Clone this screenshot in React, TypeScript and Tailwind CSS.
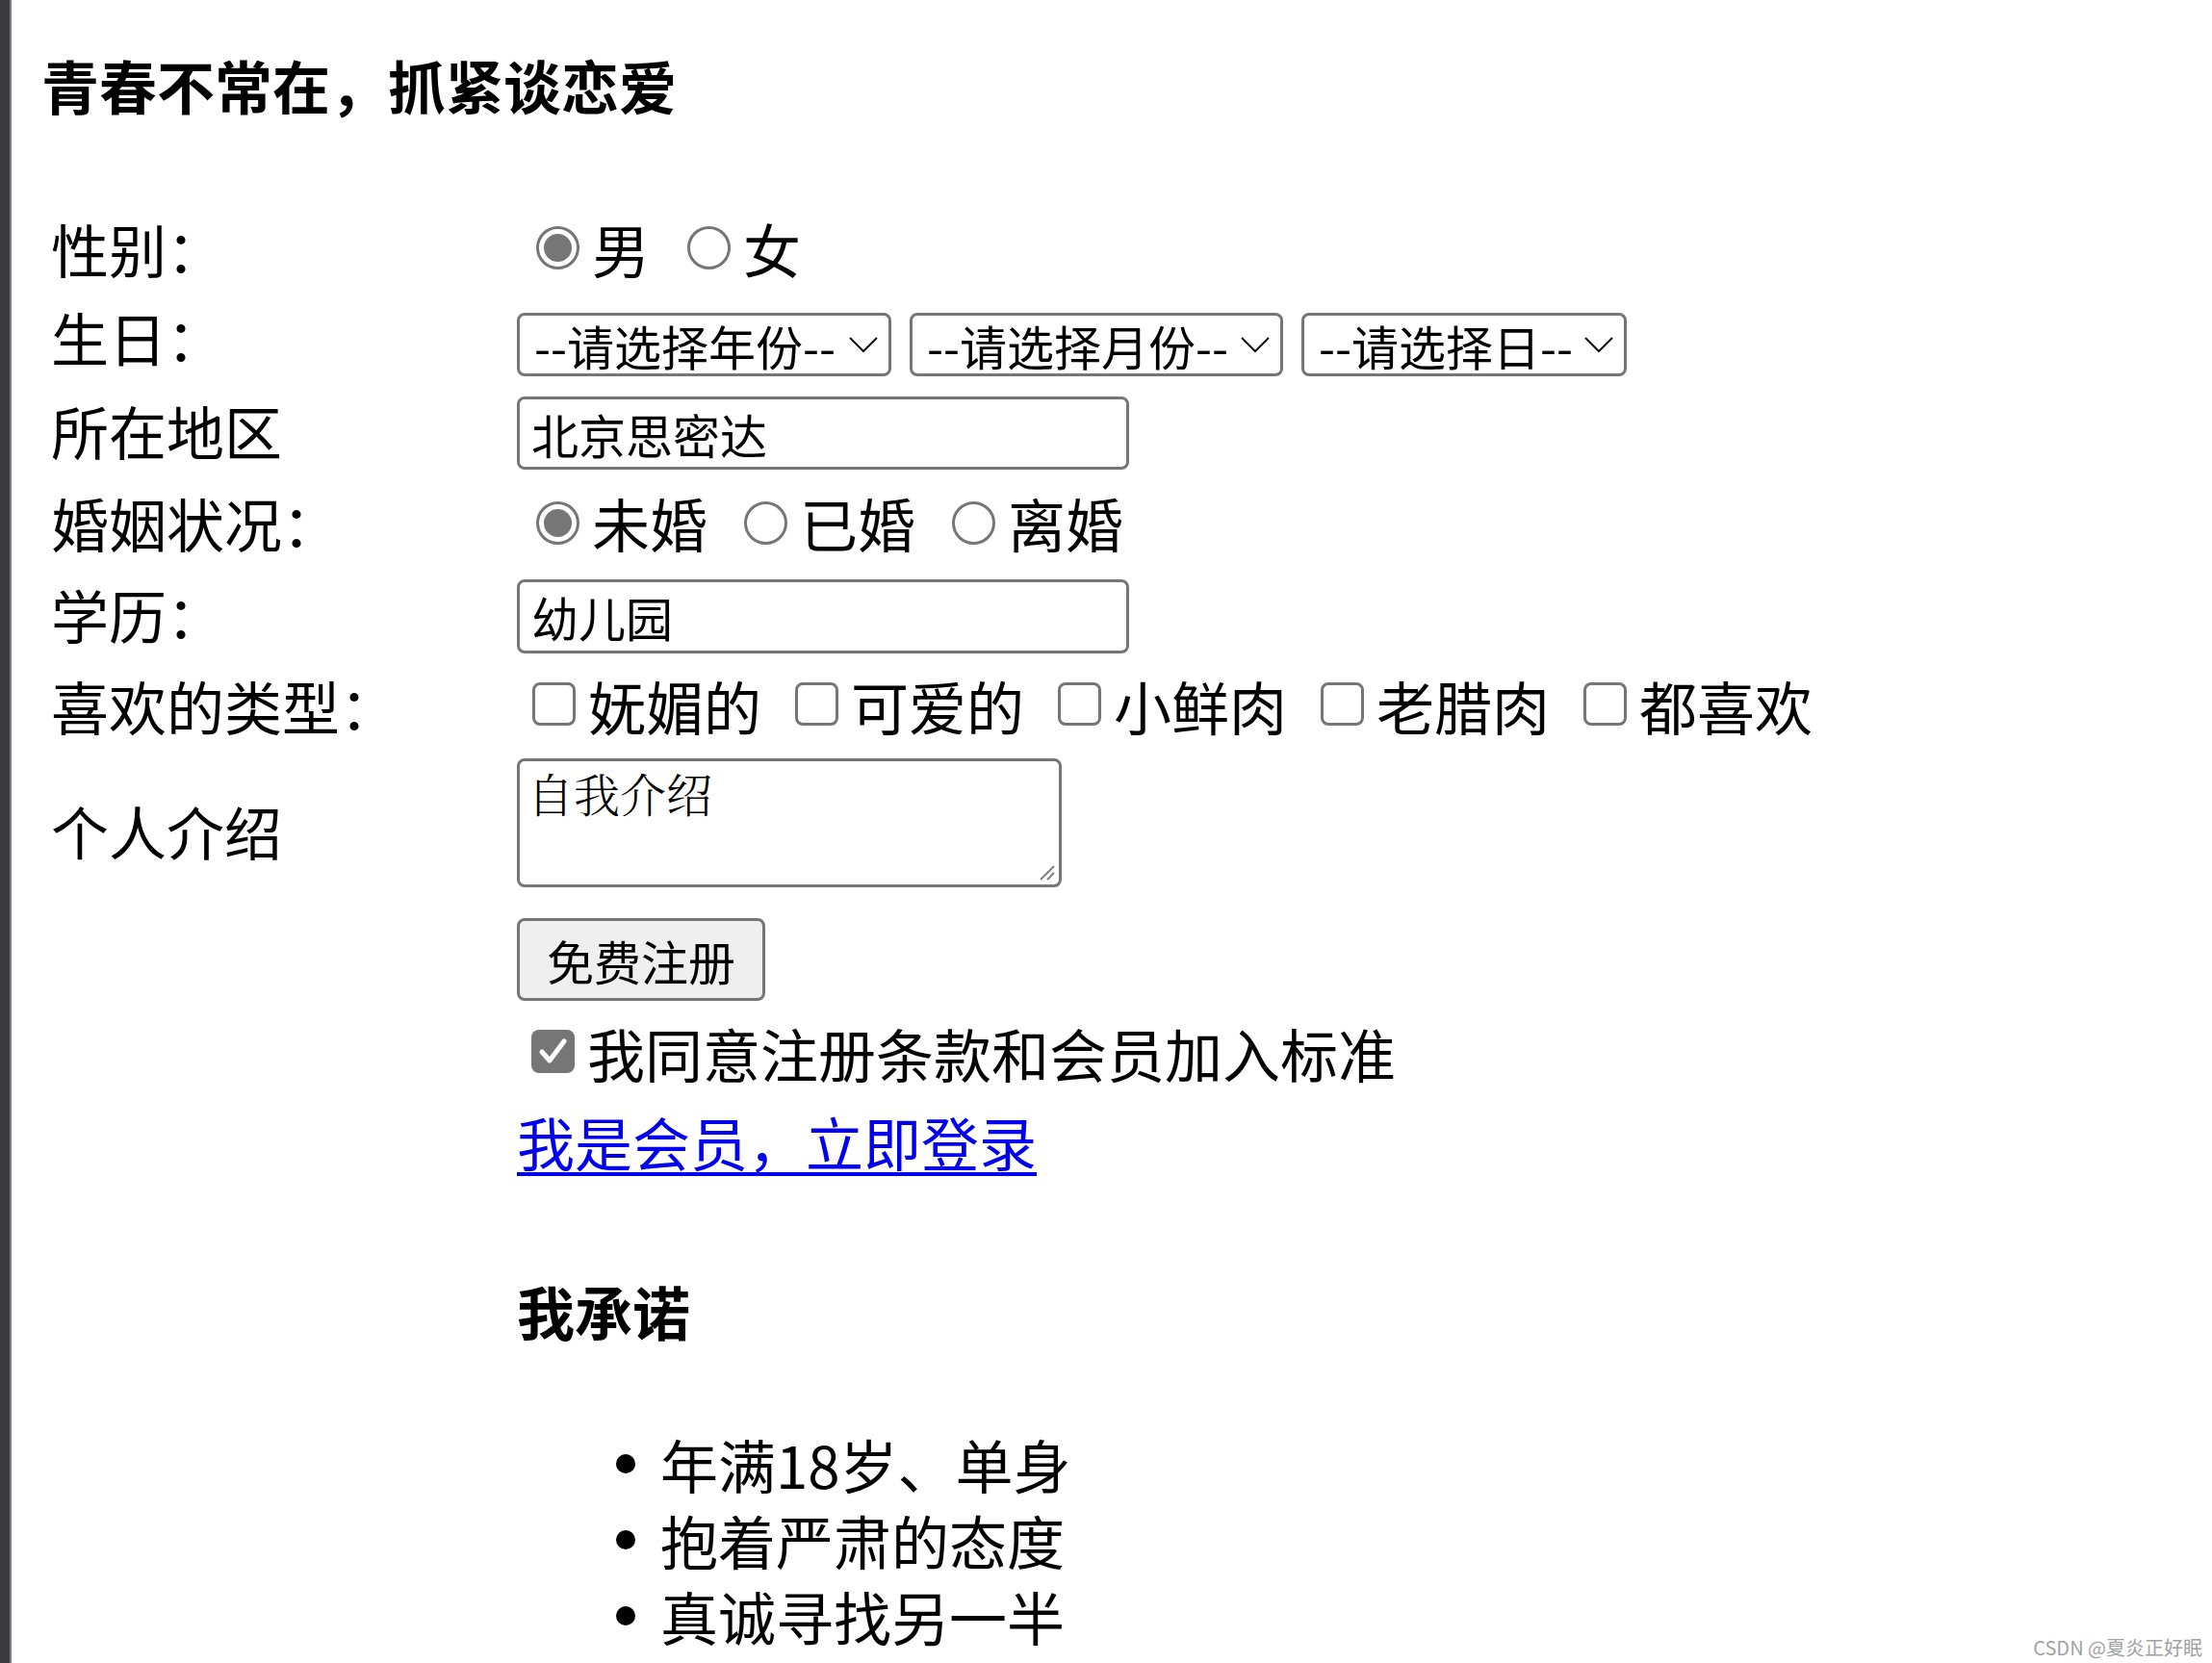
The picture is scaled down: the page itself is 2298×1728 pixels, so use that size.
import React from "react";

const FONT = "font-['Noto_Sans_CJK_SC','Noto_Sans',sans-serif]";

function Radio({ checked }: { checked?: boolean }) {
  return (
    <span className="w-[45px] h-[45px] rounded-full border-[3px] border-[#767676] bg-white flex items-center justify-center shrink-0">
      {checked ? <span className="w-[29px] h-[29px] rounded-full bg-[#767676]" /> : null}
    </span>
  );
}

function Checkbox({ checked }: { checked?: boolean }) {
  if (checked) {
    return (
      <span className="w-[45px] h-[45px] rounded-[8px] bg-[#767676] flex items-center justify-center shrink-0">
        <svg width="45" height="45" viewBox="0 0 45 45">
          <path d="M11 23 L19 32 L34 12" fill="none" stroke="#ffffff" strokeWidth="5" strokeLinecap="round" strokeLinejoin="round" />
        </svg>
      </span>
    );
  }
  return <span className="block w-[45px] h-[45px] rounded-[8px] border-[3px] border-[#767676] bg-white shrink-0" />;
}

function FakeSelect({ label, width }: { label: string; width: string }) {
  return (
    <div className={`${width} h-[66px] mt-[6px] rounded-[8px] border-[3px] border-[#767676] bg-white flex items-center justify-between pl-[15px] pr-[10px] shrink-0`}>
      <span className="text-[49px] leading-[49px] whitespace-nowrap">{label}</span>
      <svg width="32" height="19" viewBox="0 0 32 19" className="shrink-0">
        <path d="M2 2 L16 16 L30 2" fill="none" stroke="#111111" strokeWidth="2" />
      </svg>
    </div>
  );
}

export default function App() {
  const label = "w-[484px] shrink-0 text-[60px] leading-[60px] whitespace-nowrap";
  const txt = "text-[60px] leading-[60px] whitespace-nowrap";
  return (
    <div className={`${FONT} relative flex w-full h-[1728px] overflow-hidden bg-white text-black`} lang="zh-CN">
      <div className="w-[10px] shrink-0 bg-[#3a3b3f]" />
      <div className="w-[2px] shrink-0 bg-[#7b7b80]" />
      <main className="flex-1 pl-[31px]">
        <h4 className="mt-[58px] text-[60px] leading-[60px] font-bold whitespace-nowrap">青春不常在，抓紧谈恋爱</h4>

        <div className="mt-[92px] ml-[10px]">
          {/* 性别 */}
          <div className="flex items-center h-[95px]">
            <div className={label}>性别：</div>
            <div className="flex items-center pl-[20px]">
              <Radio checked />
              <span className={`${txt} ml-[13px]`}>男</span>
              <span className="ml-[39px]"><Radio /></span>
              <span className={`${txt} ml-[13px]`}>女</span>
            </div>
          </div>

          {/* 生日 */}
          <div className="flex items-center h-[100px]">
            <div className={`${label} mb-[10px]`}>生日：</div>
            <div className="flex items-center gap-[19px]">
              <FakeSelect label="--请选择年份--" width="w-[389px]" />
              <FakeSelect label="--请选择月份--" width="w-[388px]" />
              <FakeSelect label="--请选择日--" width="w-[338px]" />
            </div>
          </div>

          {/* 所在地区 */}
          <div className="flex items-center h-[90px]">
            <div className={`${label} mb-[6px]`}>所在地区</div>
            <div className="w-[636px] h-[76px] rounded-[8px] border-[3px] border-[#767676] flex items-center pl-[12px]">
              <span className="text-[49px] leading-[49px] whitespace-nowrap">北京思密达</span>
            </div>
          </div>

          {/* 婚姻状况 */}
          <div className="flex items-center h-[96px]">
            <div className={label}>婚姻状况：</div>
            <div className="flex items-center pl-[20px]">
              <Radio checked />
              <span className={`${txt} ml-[13px]`}>未婚</span>
              <span className="ml-[38px]"><Radio /></span>
              <span className={`${txt} ml-[13px]`}>已婚</span>
              <span className="ml-[38px]"><Radio /></span>
              <span className={`${txt} ml-[13px]`}>离婚</span>
            </div>
          </div>

          {/* 学历 */}
          <div className="flex items-center h-[98px]">
            <div className={`${label} mb-[4px]`}>学历：</div>
            <div className="w-[636px] h-[77px] rounded-[8px] border-[3px] border-[#767676] flex items-center pl-[12px]">
              <span className="text-[49px] leading-[49px] whitespace-nowrap">幼儿园</span>
            </div>
          </div>

          {/* 喜欢的类型 */}
          <div className="flex items-center h-[88px]">
            <div className={label}>喜欢的类型：</div>
            <div className="flex items-center pl-[16px]">
              {["妩媚的", "可爱的", "小鲜肉", "老腊肉", "都喜欢"].map((t, i) => (
                <div key={t} className={`flex items-center ${i === 0 ? "" : "ml-[35px]"}`}>
                  <span className="block mb-[4px]"><Checkbox /></span>
                  <span className={`${txt} ml-[13px]`}>{t}</span>
                </div>
              ))}
            </div>
          </div>

          {/* 个人介绍 */}
          <div className="flex items-start h-[155px]">
            <div className={`${label} mt-[56px]`}>个人介绍</div>
            <div className="relative mt-[11px] w-[566px] h-[134px]">
              <textarea
                readOnly
                defaultValue="自我介绍"
                className="w-full h-full resize-none rounded-[8px] border-[3px] border-[#767676] bg-white pl-[8px] pt-[5px] text-[48px] leading-[56px] font-light text-black outline-none font-['Noto_Serif_CJK_SC','Noto_Sans_CJK_SC',serif]"
              />
              <svg width="22" height="22" viewBox="0 0 22 22" className="absolute right-[6px] bottom-[6px]">
                <path d="M20 6 L6 20 M20 13 L13 20" stroke="#808080" strokeWidth="2" fill="none" />
              </svg>
            </div>
          </div>

          {/* 免费注册 */}
          <div className="flex mt-[22px]">
            <div className="w-[484px] shrink-0" />
            <button className="w-[258px] h-[86px] rounded-[8px] border-[3px] border-[#767676] bg-[#efefef] flex items-center justify-center">
              <span className="text-[49px] leading-[49px] whitespace-nowrap">免费注册</span>
            </button>
          </div>

          {/* 同意 */}
          <div className="flex items-center h-[80px] mt-[14px]">
            <div className="w-[484px] shrink-0" />
            <div className="flex items-center pl-[15px]">
              <span className="block mb-[4px]"><Checkbox checked /></span>
              <span className={`${txt} ml-[13px]`}>我同意注册条款和会员加入标准</span>
            </div>
          </div>

          {/* 登录 */}
          <div className="flex items-center h-[80px] mt-[12px]">
            <div className="w-[484px] shrink-0" />
            <a href="#" className={`${txt} text-[#0000ee] underline decoration-[4px] underline-offset-[6px]`}>我是会员，立即登录</a>
          </div>

          {/* 我承诺 */}
          <div className="flex mt-[106px]">
            <div className="w-[484px] shrink-0" />
            <div>
              <h4 className="text-[60px] leading-[60px] font-bold whitespace-nowrap">我承诺</h4>
              <ul className="mt-[89px]">
                {["年满18岁、单身", "抱着严肃的态度", "真诚寻找另一半"].map((t) => (
                  <li key={t} className="flex items-center h-[79px]">
                    <span className="ml-[103px] mr-[26px] w-[20px] h-[20px] rounded-full bg-black shrink-0" />
                    <span className={txt}>{t}</span>
                  </li>
                ))}
              </ul>
            </div>
          </div>
        </div>
      </main>
      <div className="absolute right-[10px] bottom-[5px] text-[20px] leading-[22px] text-[#a3a3a3] whitespace-nowrap">CSDN @夏炎正好眠</div>
    </div>
  );
}
